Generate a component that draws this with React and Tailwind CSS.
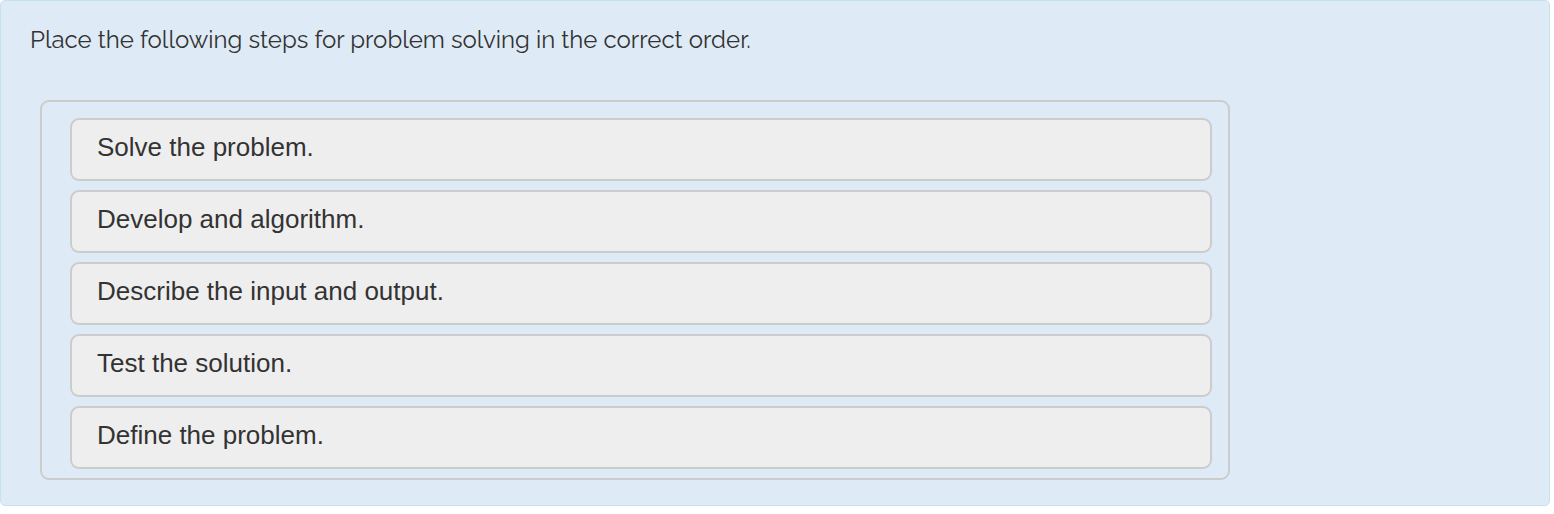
import React from 'react';

const steps = [
    'Solve the problem.',
    'Develop and algorithm.',
    'Describe the input and output.',
    'Test the solution.',
    'Define the problem.',
];

const App = () => {
    return (
        <div className="w-[1554px] h-[514px] bg-white">
            <div className="w-[1550px] h-[506px] bg-[#deebf7] border border-[#c4e3ef] rounded-[5px] pt-[24px] pl-[29px]">
                <p className="text-[24px] leading-[30px] text-[#333] font-['Raleway','Lato','Open_Sans',sans-serif]">
                    Place the following steps for problem solving in the correct order.
                </p>
                <div className="mt-[45px] ml-[10px] w-[1190px] h-[380px] border-2 border-[#ccc] rounded-[9px] pt-[16px] pl-[28px] flex flex-col gap-[9px]">
                    {steps.map((s) => (
                        <div
                            key={s}
                            className="w-[1142px] h-[63px] bg-[#eee] border-2 border-[#ccc] rounded-[9px] pl-[25px] flex items-center pb-[4px] text-[26px] text-[#333] font-['Liberation_Sans',Arial,sans-serif]"
                        >
                            {s}
                        </div>
                    ))}
                </div>
            </div>
        </div>
    );
};

export default App;
